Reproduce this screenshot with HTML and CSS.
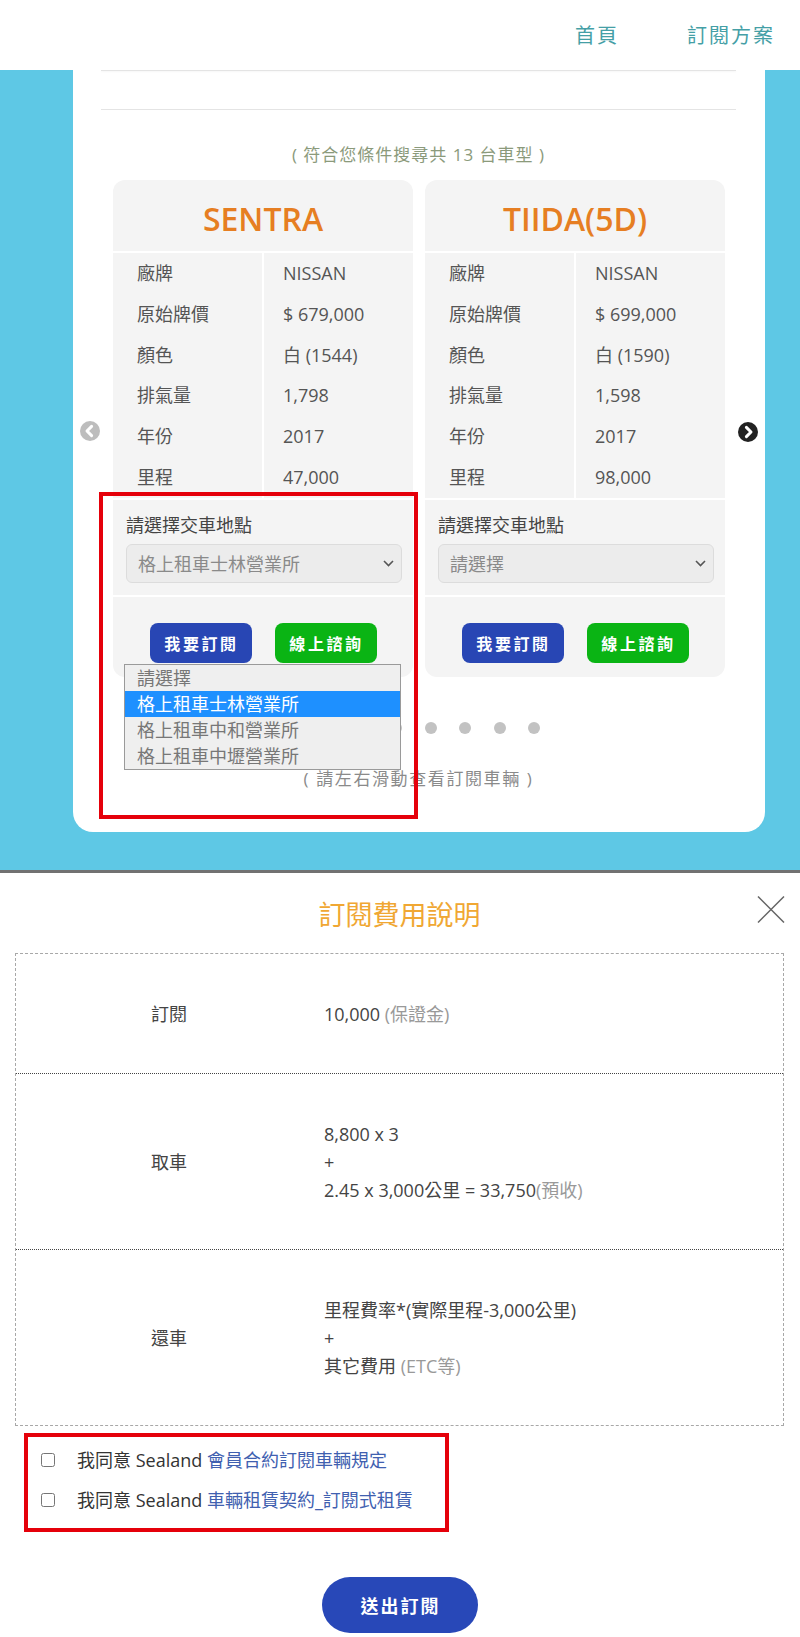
FILE: index.html
```html
<!DOCTYPE html>
<html lang="zh-Hant">
<head>
<meta charset="utf-8">
<title>訂閱方案</title>
<link rel="stylesheet" href="styles.css">
</head>
<body>
<div class="page">
  <header class="topbar">
    <a href="#">首頁</a>
    <a href="#">訂閱方案</a>
  </header>

  <section class="band">
    <div class="panel">
      <div class="rule rule-top"></div>
      <div class="rule rule-second"></div>
      <p class="result">( 符合您條件搜尋共 13 台車型 )</p>

      <div class="slider">
        <div class="cards">
          <article class="car">
            <h2 class="car-title">SENTRA</h2>
            <dl class="specs">
              <dt>廠牌</dt><dd>NISSAN</dd>
              <dt>原始牌價</dt><dd>$ 679,000</dd>
              <dt>顏色</dt><dd>白 (1544)</dd>
              <dt>排氣量</dt><dd>1,798</dd>
              <dt>年份</dt><dd>2017</dd>
              <dt>里程</dt><dd>47,000</dd>
            </dl>
            <div class="pick">
              <span class="pick-label">請選擇交車地點</span>
              <div class="select">
                <span>格上租車士林營業所</span>
                <svg class="chev" width="11" height="7" viewBox="0 0 11 7"><path d="M1 1 L5.5 5.5 L10 1" fill="none" stroke="#555" stroke-width="1.6"/></svg>
              </div>
            </div>
            <div class="actions">
              <button class="btn btn-sub">我要訂閱</button>
              <button class="btn btn-ask">線上諮詢</button>
            </div>
          </article>

          <article class="car">
            <h2 class="car-title">TIIDA(5D)</h2>
            <dl class="specs">
              <dt>廠牌</dt><dd>NISSAN</dd>
              <dt>原始牌價</dt><dd>$ 699,000</dd>
              <dt>顏色</dt><dd>白 (1590)</dd>
              <dt>排氣量</dt><dd>1,598</dd>
              <dt>年份</dt><dd>2017</dd>
              <dt>里程</dt><dd>98,000</dd>
            </dl>
            <div class="pick">
              <span class="pick-label">請選擇交車地點</span>
              <div class="select">
                <span>請選擇</span>
                <svg class="chev" width="11" height="7" viewBox="0 0 11 7"><path d="M1 1 L5.5 5.5 L10 1" fill="none" stroke="#555" stroke-width="1.6"/></svg>
              </div>
            </div>
            <div class="actions">
              <button class="btn btn-sub">我要訂閱</button>
              <button class="btn btn-ask">線上諮詢</button>
            </div>
          </article>
        </div>

        <span class="arrow arrow-prev">
          <svg width="20" height="20" viewBox="0 0 20 20"><circle cx="10" cy="10" r="10" fill="#bdbdbd"/><path d="M11.6 5.4 L7 10 L11.6 14.6" fill="none" stroke="#fff" stroke-width="3" stroke-linecap="round" stroke-linejoin="round"/></svg>
        </span>
        <span class="arrow arrow-next">
          <svg width="20" height="20" viewBox="0 0 20 20"><circle cx="10" cy="10" r="10" fill="#222"/><path d="M8.4 5.4 L13 10 L8.4 14.6" fill="none" stroke="#fff" stroke-width="3" stroke-linecap="round" stroke-linejoin="round"/></svg>
        </span>

        <ul class="dropdown">
          <li>請選擇</li>
          <li class="active">格上租車士林營業所</li>
          <li>格上租車中和營業所</li>
          <li>格上租車中壢營業所</li>
        </ul>
      </div>

      <div class="dots">
        <span></span><span></span><span></span><span></span><span></span><span></span><span></span><span></span><span></span>
      </div>
      <p class="hint">( 請左右滑動查看訂閱車輛 )</p>
    </div>
  </section>

  <section class="modal">
    <h3 class="modal-title">訂閱費用說明</h3>
    <span class="close">
      <svg width="28" height="27" viewBox="0 0 28 27"><path d="M1 0.5 L27 26.5 M27 0.5 L1 26.5" stroke="#666" stroke-width="1.5" fill="none"/></svg>
    </span>

    <div class="fees">
      <div class="fee-row">
        <div class="fee-label">訂閱</div>
        <div class="fee-value">10,000 <span class="muted">(保證金)</span></div>
      </div>
      <div class="fee-row">
        <div class="fee-label">取車</div>
        <div class="fee-value">8,800 x 3<br>+<br>2.45 x 3,000公里 = 33,750<span class="muted">(預收)</span></div>
      </div>
      <div class="fee-row">
        <div class="fee-label">還車</div>
        <div class="fee-value">里程費率*(實際里程-3,000公里)<br>+<br>其它費用 <span class="muted">(ETC等)</span></div>
      </div>
    </div>

    <ul class="agree">
      <li><label><input type="checkbox"><span>我同意 Sealand <a href="#">會員合約訂閱車輛規定</a></span></label></li>
      <li><label><input type="checkbox"><span>我同意 Sealand <a href="#">車輛租賃契約_訂閱式租賃</a></span></label></li>
    </ul>

    <button class="submit">送出訂閱</button>
  </section>

  <div class="highlight hl-select"></div>
  <div class="highlight hl-agree"></div>
</div>
</body>
</html>
```

FILE: styles.css
```css
* { box-sizing: border-box; }

body {
  margin: 0;
  background: #fff;
  font-family: "Open Sans", "Noto Sans CJK TC", sans-serif;
  color: #555;
}

.page {
  position: relative;
  width: 800px;
}

/* header */
.topbar {
  height: 69px;
  display: flex;
  justify-content: flex-end;
  align-items: center;
  gap: 68px;
  padding-right: 25px;
  background: #fff;
}
.topbar a {
  font-family: "Noto Sans CJK TC", sans-serif;
  font-size: 20px;
  line-height: 24px;
  letter-spacing: 2px;
  color: #459fa6;
  text-decoration: none;
}

/* blue band + panel */
.band {
  background: #5ec8e5;
  padding: 0 35px 38px 73px;
}
.panel {
  background: #fff;
  border-radius: 0 0 20px 20px;
  padding: 0 29px 41px 28px;
}
.rule { border-top: 1px solid #e4e4e4; }
.rule-top { margin-top: 1px; box-shadow: 0 1px 2px rgba(0,0,0,0.05); }
.rule-second { margin-top: 38px; }

.result {
  margin: 33px 0 0;
  text-align: center;
  font-size: 17px;
  line-height: 24px;
  letter-spacing: 1px;
  color: #8b9a7b;
}

/* slider */
.slider {
  position: relative;
  margin-top: 13px;
  padding: 0 11px 0 12px;
}
.cards {
  display: grid;
  grid-template-columns: 300px 300px;
  gap: 12px;
}
.car {
  background: #f4f4f4;
  border-radius: 12px;
  overflow: hidden;
}
.car-title {
  margin: 0;
  height: 73px;
  padding-top: 6px;
  line-height: 65px;
  border-bottom: 2px solid #fff;
  text-align: center;
  font-size: 32px;
  font-weight: 600;
  color: #e67e22;
}
.specs {
  margin: 0;
  display: grid;
  grid-template-columns: 151px 1fr;
  border-bottom: 2px solid #fff;
  font-size: 18px;
  color: #555;
}
.specs dt {
  padding-left: 24px;
  line-height: 40.8px;
  border-right: 2px solid #fff;
}
.specs dd {
  margin: 0;
  padding-left: 19px;
  line-height: 40.8px;
}

.pick {
  padding: 13px 11px 12px 13px;
  border-bottom: 2px solid #fff;
}
.pick-label {
  display: block;
  font-size: 18px;
  line-height: 24px;
  color: #444;
}
.select {
  margin-top: 7px;
  height: 39px;
  display: flex;
  align-items: center;
  justify-content: space-between;
  padding: 0 7px 0 11px;
  background: #ececec;
  border: 1px solid #dcdcdc;
  border-radius: 6px;
  font-size: 18px;
  color: #8a8a8a;
}
.chev { display: block; }

.actions {
  display: flex;
  justify-content: center;
  gap: 23px;
  padding: 26px 0 14px;
}
.btn {
  width: 102px;
  height: 40px;
  border: 0;
  border-radius: 8px;
  color: #fff;
  font-family: "Noto Sans CJK TC", sans-serif;
  font-size: 16px;
  font-weight: 700;
  letter-spacing: 2.6px;
  padding: 0 0 0 2px;
}
.btn-sub { background: #2846b4; }
.btn-ask { background: #0ab414; }

.arrow {
  position: absolute;
  width: 20px;
  height: 20px;
}
.arrow svg { display: block; }
.arrow-prev { left: -21px; top: 241px; }
.arrow-next { left: 637px; top: 242px; }

.dropdown {
  position: absolute;
  left: 23px;
  top: 484px;
  width: 277px;
  margin: 0;
  padding: 0;
  list-style: none;
  background: #efefef;
  border: 1px solid #9a9a9a;
  font-size: 18px;
  color: #777;
}
.dropdown li {
  height: 26px;
  line-height: 26px;
  padding-left: 12px;
}
.dropdown li.active {
  background: #1e90ff;
  color: #fff;
}

.dots {
  margin-top: 45px;
  display: flex;
  justify-content: center;
  gap: 22.6px;
  padding-right: 45px;
}
.dots span {
  width: 12px;
  height: 12px;
  border-radius: 50%;
  background: #c2c2c2;
}

.hint {
  margin: 33px 0 0;
  text-align: center;
  font-size: 17px;
  line-height: 24px;
  letter-spacing: 1.6px;
  color: #8a8a8a;
}

/* modal */
.modal {
  position: relative;
  border-top: 3px solid #717171;
  padding: 0 16px 4px 15px;
  color: #444;
}
.modal-title {
  margin: 0;
  padding-top: 22px;
  line-height: 40px;
  text-align: center;
  font-size: 27px;
  font-weight: 400;
  color: #f0a733;
}
.close {
  position: absolute;
  top: 23px;
  right: 15px;
  width: 28px;
  height: 27px;
}
.close svg { display: block; }

.fees {
  margin-top: 18px;
  border: 1px dashed #a8a8a8;
}
.fee-row {
  display: grid;
  grid-template-columns: 308px 1fr;
  align-items: center;
  padding: 46px 0 45px;
  font-size: 18px;
  line-height: 28px;
}
.fee-row + .fee-row { border-top: 1px dotted #444; }
.fee-label { padding-left: 135px; }
.muted { color: #999; }

.agree {
  margin: 20px 0 0;
  padding: 0 0 0 26px;
  list-style: none;
  display: flex;
  flex-direction: column;
  gap: 12px;
}
.agree label {
  display: flex;
  align-items: center;
  gap: 22px;
  font-size: 18px;
  line-height: 28px;
  color: #333;
}
.agree input {
  margin: 0;
  width: 14px;
  height: 14px;
}
.agree a {
  color: #4060b0;
  text-decoration: none;
}

.submit {
  display: block;
  margin: 63px auto 0;
  width: 156px;
  height: 56px;
  border: 0;
  border-radius: 28px;
  background: #2848b8;
  color: #fff;
  font-family: "Noto Sans CJK TC", sans-serif;
  font-size: 18px;
  font-weight: 700;
  letter-spacing: 2px;
  padding: 0 0 0 2px;
}

/* red annotation boxes */
.highlight {
  position: absolute;
  border: 4px solid #e5000a;
  pointer-events: none;
}
.hl-select { left: 99px; top: 492px; width: 319px; height: 327px; }
.hl-agree { left: 24px; top: 1433px; width: 425px; height: 99px; }
```
